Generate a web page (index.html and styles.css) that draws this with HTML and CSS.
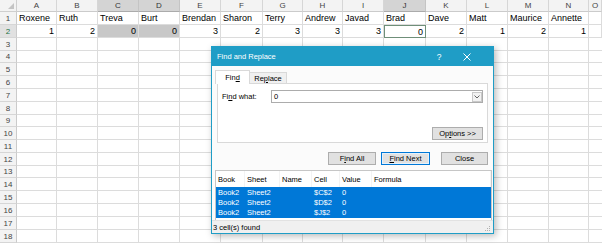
FILE: index.html
```html
<!DOCTYPE html>
<html>
<head>
<meta charset="utf-8">
<link rel="stylesheet" href="styles.css">
</head>
<body>
<div class="sheet">
  <div class="corner"><svg width="6" height="6" viewBox="0 0 6 6"><polygon points="6,0 6,6 0,6" fill="#c4c4c4"/></svg></div>
  <div class="ch">A</div><div class="ch">B</div><div class="ch sel">C</div><div class="ch sel">D</div><div class="ch">E</div><div class="ch">F</div><div class="ch">G</div><div class="ch">H</div><div class="ch">I</div><div class="ch sel">J</div><div class="ch">K</div><div class="ch">L</div><div class="ch">M</div><div class="ch">N</div><div class="ch">O</div>

  <div class="rh">1</div>
  <div class="c">Roxene</div><div class="c">Ruth</div><div class="c">Treva</div><div class="c">Burt</div><div class="c">Brendan</div><div class="c">Sharon</div><div class="c">Terry</div><div class="c">Andrew</div><div class="c">Javad</div><div class="c">Brad</div><div class="c">Dave</div><div class="c">Matt</div><div class="c">Maurice</div><div class="c">Annette</div><div class="c"></div>

  <div class="rh sel">2</div>
  <div class="c n">1</div><div class="c n">2</div><div class="c n hl">0</div><div class="c n hl">0</div><div class="c n">3</div><div class="c n">2</div><div class="c n">3</div><div class="c n">3</div><div class="c n">3</div><div class="c n act">0</div><div class="c n">2</div><div class="c n">1</div><div class="c n">2</div><div class="c n">1</div><div class="c"></div>

  <div class="rh">3</div><div class="blank"></div>
  <div class="rh">4</div><div class="blank"></div>
  <div class="rh">5</div><div class="blank"></div>
  <div class="rh">6</div><div class="blank"></div>
  <div class="rh">7</div><div class="blank"></div>
  <div class="rh">8</div><div class="blank"></div>
  <div class="rh">9</div><div class="blank"></div>
  <div class="rh">10</div><div class="blank"></div>
  <div class="rh">11</div><div class="blank"></div>
  <div class="rh">12</div><div class="blank"></div>
  <div class="rh">13</div><div class="blank"></div>
  <div class="rh">14</div><div class="blank"></div>
  <div class="rh">15</div><div class="blank"></div>
  <div class="rh">16</div><div class="blank"></div>
  <div class="rh">17</div><div class="blank"></div>
  <div class="rh">18</div><div class="blank"></div>
</div>

<div class="dlg">
  <div class="ttl">
    <span class="tt">Find and Replace</span>
    <span class="q">?</span>
    <span class="x"><svg width="8" height="8" viewBox="0 0 8 8"><path d="M0.5 0.5 L7.5 7.5 M7.5 0.5 L0.5 7.5" stroke="#fff" stroke-width="1"/></svg></span>
  </div>
  <div class="dbody">
    <div class="tabs">
      <div class="tab on">Fin<u>d</u></div>
      <div class="tab t2">Re<u>p</u>lace</div>
    </div>
    <div class="panel">
      <div class="fw">
        <span class="lbl">Fi<u>n</u>d what:</span>
        <div class="inp"><span class="v">0</span><span class="dd"><svg width="6" height="4" viewBox="0 0 6 4"><path d="M0.5 0.5 L3 3 L5.5 0.5" fill="none" stroke="#555" stroke-width="0.9"/></svg></span></div>
      </div>
      <div class="opt"><div class="btn bo">Op<u>t</u>ions &gt;&gt;</div></div>
    </div>
    <div class="btns">
      <div class="btn b1">F<u>i</u>nd All</div>
      <div class="btn b2"><u>F</u>ind Next</div>
      <div class="btn b3">Close</div>
    </div>
    <div class="list">
      <div class="lrow lh"><span>Book</span><span>Sheet</span><span>Name</span><span>Cell</span><span>Value</span><span>Formula</span></div>
      <div class="lrow lr"><span>Book2</span><span>Sheet2</span><span></span><span>$C$2</span><span>0</span><span></span></div>
      <div class="lrow lr"><span>Book2</span><span>Sheet2</span><span></span><span>$D$2</span><span>0</span><span></span></div>
      <div class="lrow lr"><span>Book2</span><span>Sheet2</span><span></span><span>$J$2</span><span>0</span><span></span></div>
    </div>
    <div class="status">
      <span>3 cell(s) found</span>
      <svg width="6" height="6" viewBox="0 0 6 6"><g fill="#b0b0b0"><rect x="4" y="0" width="1" height="1"/><rect x="2" y="2" width="1" height="1"/><rect x="4" y="2" width="1" height="1"/><rect x="0" y="4" width="1" height="1"/><rect x="2" y="4" width="1" height="1"/><rect x="4" y="4" width="1" height="1"/></g></svg>
    </div>
  </div>
</div>
</body>
</html>
```

FILE: styles.css
```css
* { box-sizing: border-box; }

html, body {
  margin: 0;
  padding: 0;
}

body {
  width: 602px;
  height: 244px;
  overflow: hidden;
  background: #ffffff;
  font-family: "Liberation Sans", Arial, sans-serif;
  color: #000;
}

/* ---------- spreadsheet ---------- */
.sheet {
  display: grid;
  grid-template-columns: 17px 40px 41px 41px 41px 41px 42px 40px 40px 41px 42px 41px 41px 41px 40px 1fr;
  grid-template-rows: 12px 13px 13px 13px 12px 13px 13px 13px 13px 12px 13px 13px 13px 12px 13px 13px 13px 13px 13px;
  width: 602px;
}

.corner {
  background: #f3f3f3;
  border-right: 1px solid #cfcfcf;
  border-bottom: 1px solid #cfcfcf;
  display: flex;
  align-items: flex-end;
  justify-content: flex-end;
  padding: 0 2px 2px 0;
}

.ch {
  background: #f3f3f3;
  border-right: 1px solid #d6d6d6;
  border-bottom: 1px solid #cbcbcb;
  font-size: 8px;
  color: #444;
  display: flex;
  align-items: center;
  justify-content: center;
}

.ch.sel {
  background: #d4d4d4;
  color: #333;
  border-right-color: #c4c4c4;
  border-bottom-color: #ababab;
}

.rh {
  background: #f3f3f3;
  border-right: 1px solid #cbcbcb;
  border-bottom: 1px solid #d6d6d6;
  font-size: 8px;
  color: #444;
  display: flex;
  align-items: center;
  justify-content: center;
}

.rh.sel {
  background: #e1e1e1;
  color: #217346;
}

.c {
  border-right: 1px solid #dcdcdc;
  border-bottom: 1px solid #dcdcdc;
  font-size: 9px;
  padding: 0 2px;
  display: flex;
  align-items: center;
  white-space: nowrap;
}

.c.n { justify-content: flex-end; }

.c.hl { background: #c8c8c8; }

.c.act {
  border: 1px solid #6f8f79;
}

.blank {
  grid-column: 2 / -1;
  border-bottom: 1px solid #dcdcdc;
  background-image: linear-gradient(to right,
    transparent 39px, #dcdcdc 39px 40px,
    transparent 40px 80px, #dcdcdc 80px 81px,
    transparent 81px 121px, #dcdcdc 121px 122px,
    transparent 122px 162px, #dcdcdc 162px 163px,
    transparent 163px 203px, #dcdcdc 203px 204px,
    transparent 204px 245px, #dcdcdc 245px 246px,
    transparent 246px 285px, #dcdcdc 285px 286px,
    transparent 286px 325px, #dcdcdc 325px 326px,
    transparent 326px 366px, #dcdcdc 366px 367px,
    transparent 367px 408px, #dcdcdc 408px 409px,
    transparent 409px 449px, #dcdcdc 449px 450px,
    transparent 450px 490px, #dcdcdc 490px 491px,
    transparent 491px 531px, #dcdcdc 531px 532px,
    transparent 532px 571px, #dcdcdc 571px 572px,
    transparent 572px);
}

/* ---------- dialog ---------- */
.dlg {
  position: absolute;
  left: 211px;
  top: 46px;
  width: 283px;
  height: 188px;
  border: 1px solid #1f9dc6;
  background: #fbfbfb;
  box-shadow: 2px 2px 7px rgba(0, 0, 0, 0.28);
  display: flex;
  flex-direction: column;
  font-size: 7.5px;
  color: #000;
}

.ttl {
  height: 19px;
  flex: none;
  background: #1f9dc6;
  color: #fff;
  display: flex;
  align-items: center;
  padding: 0 12px 0 5px;
}

.tt { flex: 1; font-size: 7.5px; }

.q, .x {
  width: 28px;
  display: flex;
  justify-content: center;
  align-items: center;
}

.q { font-size: 8.5px; }

.dbody {
  flex: 1;
  display: flex;
  flex-direction: column;
}

.tabs {
  display: flex;
  align-items: flex-end;
  height: 13px;
  margin: 4px 0 0 3px;
}

.tab {
  height: 11px;
  border: 1px solid #d9d9d9;
  border-bottom: none;
  background: #f0f0f0;
  display: flex;
  align-items: center;
  justify-content: center;
}

.tab.on {
  width: 35px;
  height: 14px;
  margin-bottom: -1px;
  background: #fff;
  position: relative;
  z-index: 1;
}

.tab.t2 {
  width: 37px;
  border-left: none;
}

.panel {
  height: 60px;
  margin: 0 5px;
  border: 1px solid #d9d9d9;
  background: #fff;
  padding: 6px 4px 0 4px;
}

.fw {
  display: flex;
  align-items: center;
  height: 13px;
}

.lbl { width: 49px; flex: none; }

.inp {
  flex: 1;
  height: 13px;
  border: 1px solid #acacac;
  background: #fff;
  display: flex;
  align-items: center;
  padding: 0 0 0 2px;
}

.inp .v { flex: 1; }

.dd {
  width: 10px;
  height: 10px;
  border: 1px solid #c9c9c9;
  background: #f2f2f2;
  display: flex;
  align-items: center;
  justify-content: center;
}

.opt {
  display: flex;
  justify-content: flex-end;
  margin-top: 24px;
}

.btn {
  height: 13px;
  border: 1px solid #adadad;
  background: #e1e1e1;
  display: flex;
  align-items: center;
  justify-content: center;
  white-space: nowrap;
}

.bo { width: 51px; }

.btns {
  display: flex;
  justify-content: flex-end;
  margin: 9px 5px 0 0;
}

.b1 { width: 48px; }
.b2 { width: 49px; margin-left: 5px; border-color: #0078d7; box-shadow: inset 0 0 0 1px #e5f1fb; }
.b3 { width: 47px; margin-left: 11px; }

.list {
  height: 50px;
  margin: 5px 1px 0 3px;
  border: 1px solid #c6c6c6;
  border-bottom: none;
  background: #fff;
}

.lrow {
  display: grid;
  grid-template-columns: 29px 35px 32px 28px 32px 1fr;
}

.lrow span {
  padding-left: 2px;
  display: flex;
  align-items: center;
  white-space: nowrap;
}

.lh { height: 16px; }

.lh span { border-right: 1px solid #f3f3f3; }

.lr {
  height: 10.33px;
  background: #0078d7;
  color: #fff;
}

.status {
  flex: 1;
  background: #f0f0f0;
  border-top: 1px solid #e2e2e2;
  display: flex;
  align-items: center;
  justify-content: space-between;
  padding: 0 2px 0 1px;
}

.status svg { align-self: flex-end; margin-bottom: 1px; }
```
